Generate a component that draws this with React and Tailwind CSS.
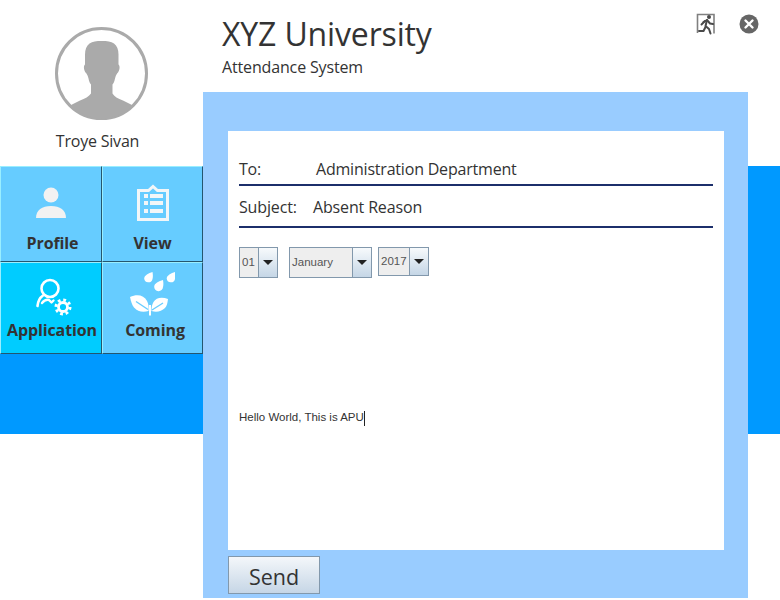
import React from 'react';

const segoe = "font-['Open_Sans','Noto_Sans',sans-serif]";

function Avatar() {
  return (
    <svg width="93" height="93" viewBox="0 0 93 93">
      <defs>
        <clipPath id="avatarClip"><circle cx="46.5" cy="46.5" r="45" /></clipPath>
      </defs>
      <circle cx="46.5" cy="46.5" r="45" fill="#fff" stroke="#aaaaaa" strokeWidth="3" />
      <path
        clipPath="url(#avatarClip)"
        fill="#aaaaaa"
        d="M46.5 14c-5 0-9 .5-12 2.500-3 2.500-4.500 6-4.500 11v10c-1.500 1-1.500 5 .5 8 1 1 2 2 3 6 .5 3 1.500 5 2.500 6v9c-2 3-6 5-11 7l-8 4-3 3v22h66v-22l-4-3-8-4c-5-2-9-4-10.500-7v-9c1-1 2-3 2.500-6 1-4 2-5 3-6 2-3 2-7 .5-8v-10c0-5-1.500-8.500-4.500-11-3-2-7-2.500-12-2.500z"
      />
    </svg>
  );
}

function ProfileIcon() {
  return (
    <svg width="32" height="36" viewBox="0 0 32 36" fill="#f2f2f2">
      <circle cx="16" cy="10" r="7.500" />
      <path d="M1 33c0-8 6-12 15-12s15 4 15 12z" />
    </svg>
  );
}

function ViewIcon() {
  return (
    <svg width="32" height="38" viewBox="0 0 32 38" fill="none">
      <path d="M1.500 6.500h10l4.500-4 4.500 4h10v29h-29z" stroke="#f2f6f8" strokeWidth="3" fill="#66ccff" />
      <g fill="#f2f6f8">
        <rect x="7" y="10" width="4" height="4" />
        <rect x="13" y="10" width="13" height="4" />
        <rect x="7" y="17" width="4" height="4" />
        <rect x="13" y="17" width="13" height="4" />
        <rect x="7" y="25" width="4" height="4" />
        <rect x="13" y="25" width="13" height="4" />
      </g>
    </svg>
  );
}

function ApplicationIcon() {
  return (
    <svg width="37" height="39" viewBox="0 0 37 39" fill="none" stroke="#fff">
      <circle cx="14" cy="10.500" r="8.500" strokeWidth="2.600" />
      <path d="M1.500 28c.5-5 2.500-8.500 5.500-10.500" strokeWidth="2.600" strokeLinecap="round" />
      <path d="M6 25c2-2.500 5-3.500 7-3l2.500 2.500 2-2" strokeWidth="2.400" strokeLinecap="round" strokeLinejoin="round" />
      <circle cx="27" cy="29" r="4.500" strokeWidth="2.800" />
      <circle cx="27" cy="29" r="7" strokeWidth="3" strokeDasharray="2.750 2.750" />
    </svg>
  );
}

function ComingIcon() {
  return (
    <svg width="45" height="44" viewBox="0 0 45 44" fill="#fff">
      <path d="M22.500 0c.5 3 .5 5 0 7a4.200 4.200 0 0 1-8.300-.5c0-3 4.500-5.500 8.300-6.500z" />
      <path d="M45 0c.5 3 .5 5 0 7a4.200 4.200 0 0 1-8.300-.5c0-3 4.500-5.500 8.300-6.500z" />
      <path d="M33 8c.5 3 .5 5 0 7a4.400 4.400 0 0 1-8.800-.5c0-3 4.800-5.500 8.800-6.500z" />
      <path d="M0 25c7-3 14-2 17 4 1.500 3 2 6 1.500 10-6 1.500-11 .5-14.500-3.500-2-2.500-3-6-4-10.500z" />
      <path d="M38 27c-6-2.500-12-1.500-14.500 3-1.500 2.500-2 5-2 9 5 1.500 10 .5 13.500-3 2-2 2.500-5 3-9z" />
      <rect x="19" y="33" width="2" height="10.500" />
      <path d="M6 29.500l12 8" stroke="#66ccff" strokeWidth="1.300" />
      <path d="M33 31l-11 7" stroke="#66ccff" strokeWidth="1.300" />
    </svg>
  );
}

function ExitIcon() {
  return (
    <svg width="20" height="22" viewBox="0 0 20 22" fill="none">
      <path d="M1.500 20V1.500h16.500v19" stroke="#808080" strokeWidth="1.600" />
      <g stroke="#4a4a4a" strokeWidth="2" strokeLinecap="round" strokeLinejoin="round">
        <path d="M7.500 9l3.500-2 3 3.500 3 .5" />
        <path d="M11 7l-1.500 6 3.500 3 1.500 4.500" />
        <path d="M9 8L5.500 11.500M9.500 14l-2 4H3" />
      </g>
      <circle cx="13" cy="4" r="2" fill="#4a4a4a" />
    </svg>
  );
}

function CloseIcon() {
  return (
    <svg width="20" height="20" viewBox="0 0 20 20">
      <circle cx="10" cy="10" r="9.500" fill="#666" />
      <path d="M6.500 6.500l7 7M13.500 6.500l-7 7" stroke="#fff" strokeWidth="2.400" strokeLinecap="round" />
    </svg>
  );
}

function Tile({ label, active, labelClass = '', children }) {
  return (
    <div
      className={`flex flex-col items-center border border-t-[#99eeff] border-l-[#99eeff] border-r-[#24566f] border-b-[#24566f] ${active ? 'bg-[#00ccff]' : 'bg-[#66ccff]'}`}
    >
      {children}
      <span className={`${segoe} text-[16px] leading-[22px] font-bold text-[#333] tracking-[-0.1px] ${labelClass}`}>{label}</span>
    </div>
  );
}

function Select({ value, width, height = 'h-[31px]' }) {
  return (
    <div className={`flex ${height} border border-[#8298ac] ${width}`}>
      <div className="flex-1 min-w-0 flex items-center pl-[2px] pt-[1px] bg-[#eeeeee] border-r border-[#8298ac] font-['Liberation_Sans',sans-serif] text-[11.500px] text-[#555]">
        {value}
      </div>
      <div className="w-[18px] flex items-center justify-center bg-gradient-to-b from-[#f7fafc] to-[#c5d6e6]">
        <div className="w-0 h-0 border-l-[5px] border-r-[5px] border-t-[5px] border-l-transparent border-r-transparent border-t-[#222]" />
      </div>
    </div>
  );
}

export default function App() {
  return (
    <div className="relative flex w-[780px] h-[600px] overflow-hidden bg-white">
      {/* left column */}
      <div className="w-[203px] shrink-0">
        <div className="h-[166px] flex flex-col items-center pt-[27px] pr-[1px]">
          <Avatar />
          <span className={`${segoe} mt-[11px] -ml-[7px] text-[16px] leading-[20px] text-[#333] tracking-[-0.2px]`}>Troye Sivan</span>
        </div>
        <div className="h-[268px] bg-[#0099ff]">
          <div className="grid grid-cols-[102px_101px] grid-rows-[96px_92px]">
            <Tile label="Profile" labelClass="ml-[3px]">
              <div className="mt-[18px] h-[47px]"><ProfileIcon /></div>
            </Tile>
            <Tile label="View">
              <div className="mt-[17px] h-[48px]"><ViewIcon /></div>
            </Tile>
            <Tile label="Application" active labelClass="ml-[2px]">
              <div className="mt-[15px] h-[41px] ml-[6px]"><ApplicationIcon /></div>
            </Tile>
            <Tile label="Coming" labelClass="ml-[5px]">
              <div className="mt-[9px] h-[47px]"><ComingIcon /></div>
            </Tile>
          </div>
        </div>
      </div>

      {/* centre column */}
      <div className="w-[545px] shrink-0">
        <div className="h-[92px] pl-[19px] pt-[14px]">
          <div className={`${segoe} text-[32px] leading-[40px] text-[#333] tracking-[-0.15px]`}>XYZ University</div>
          <div className={`${segoe} mt-[3px] text-[16px] leading-[20px] text-[#333] tracking-[-0.15px]`}>Attendance System</div>
        </div>
        <div className="h-[506px] bg-[#99ccff] pt-[39px] pl-[25px]">
          <div className="w-[496px] h-[419px] bg-white pt-[25px] px-[11px]">
            <div className={`${segoe} w-[474px] h-[30px] pb-[2px] flex items-center border-b-2 border-[#1c2f6b] text-[16px] text-[#333] tracking-[-0.2px]`}>
              <span className="w-[77px]">To:</span>
              <span>Administration Department</span>
            </div>
            <div className={`${segoe} w-[474px] h-[42px] pt-[2px] flex items-center border-b-2 border-[#1c2f6b] text-[16px] text-[#333] tracking-[-0.15px]`}>
              <span className="w-[74px]">Subject:</span>
              <span>Absent Reason</span>
            </div>
            <div className="flex items-start gap-[11px] mt-[19px]">
              <Select value="01" width="w-[39px]" />
              <Select value="January" width="w-[83px]" />
              <div className="-ml-[5px]">
                <Select value="2017" width="w-[51px]" height="h-[29px]" />
              </div>
            </div>
            <div className="mt-[132px] flex items-center h-[16px] font-['Liberation_Sans',sans-serif] text-[11.500px] text-[#333]">
              Hello World, This is APU
              <span className="inline-block w-[1px] h-[15px] bg-[#222]" />
            </div>
          </div>
          <button className={`${segoe} mt-[6px] block w-[92px] h-[38px] pt-[3px] border border-[#8298ac] bg-gradient-to-b from-[#f4f7fa] to-[#c6d6e6] text-[21.500px] leading-[32px] text-[#333]`}>
            Send
          </button>
        </div>
      </div>

      {/* right strip */}
      <div className="flex-1 mt-[166px] h-[268px] bg-[#0099ff]" />

      {/* window controls */}
      <div className="absolute top-[13px] right-[21px] flex items-center gap-[23px]">
        <ExitIcon />
        <CloseIcon />
      </div>
    </div>
  );
}
